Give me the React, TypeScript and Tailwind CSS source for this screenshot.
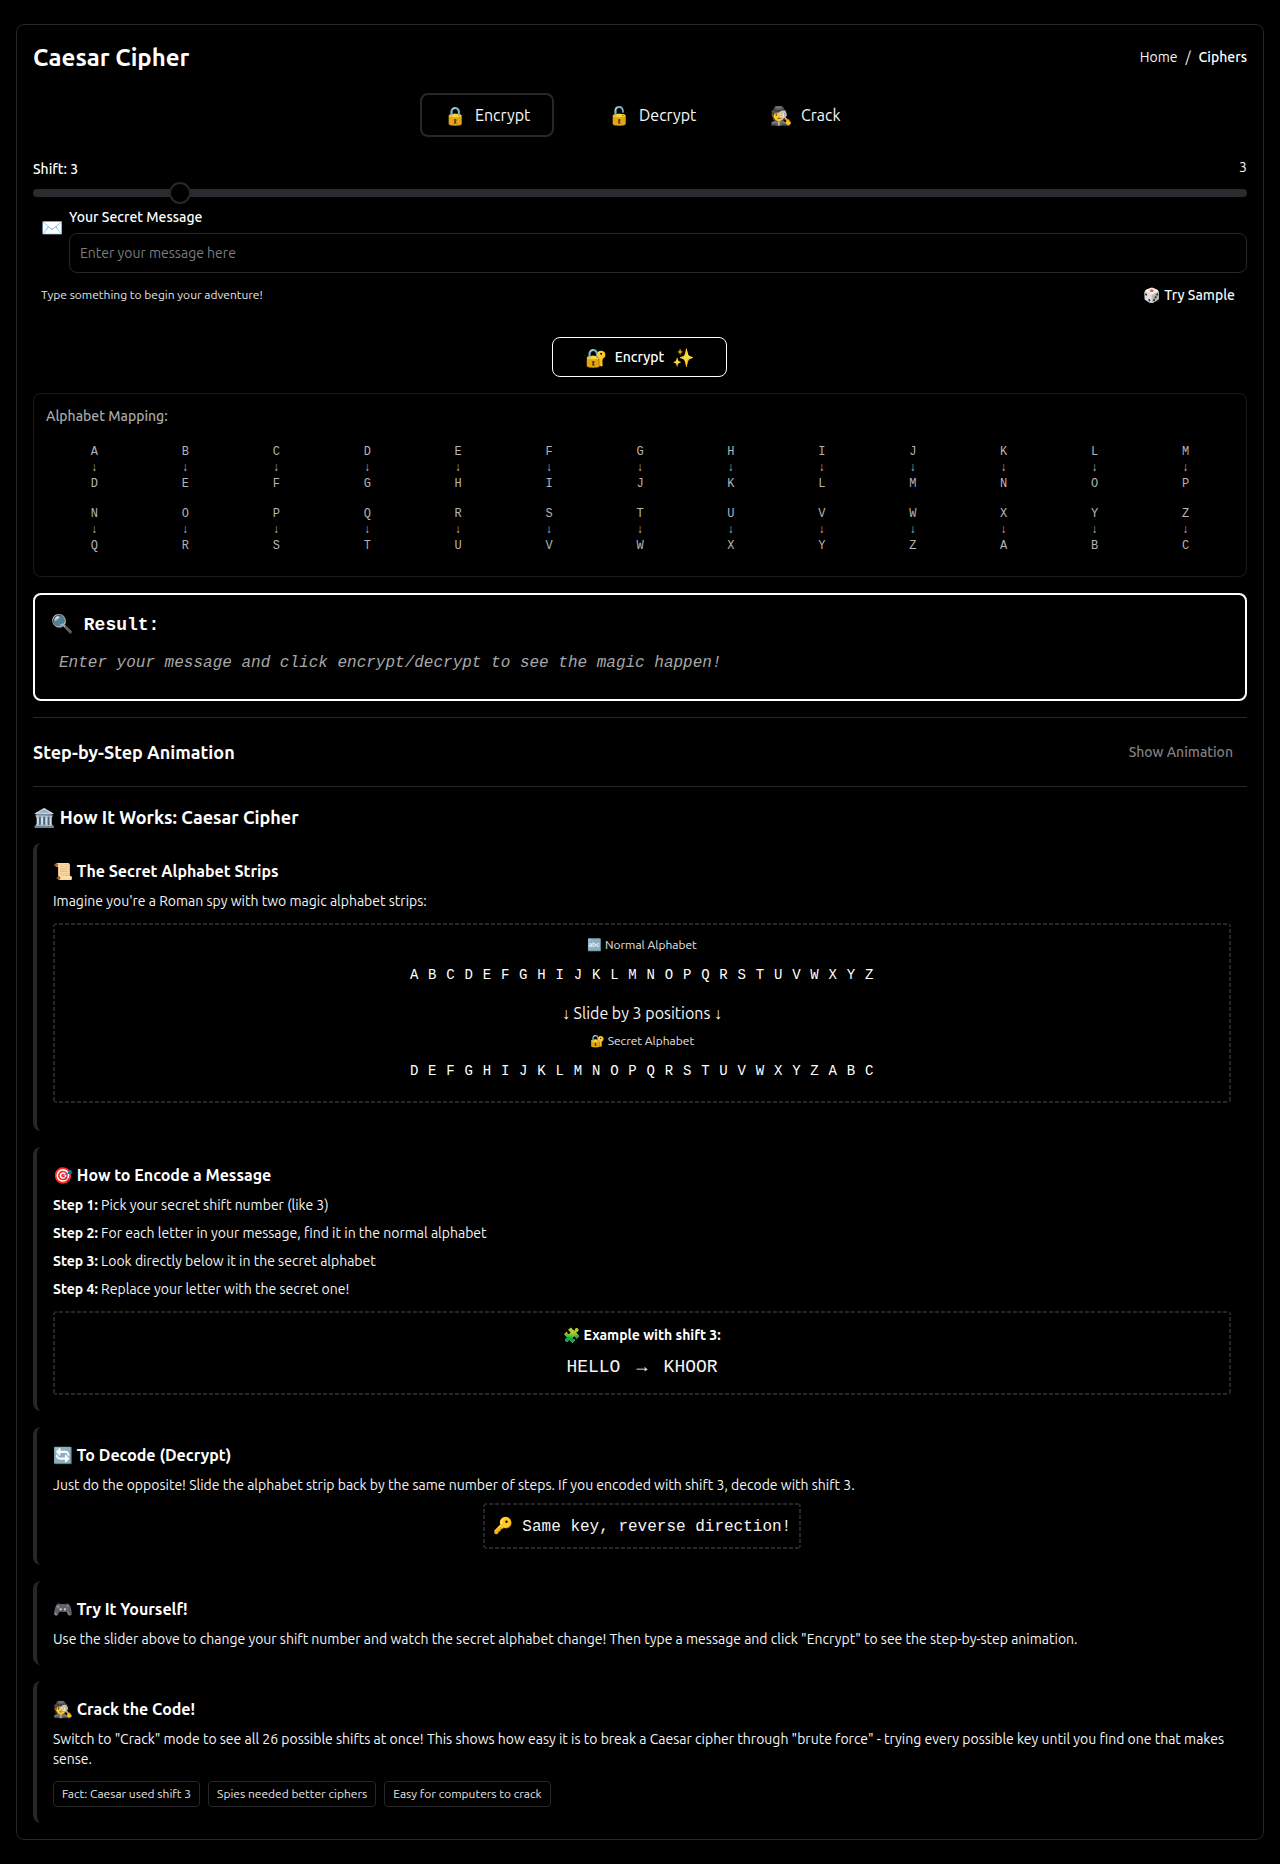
import type { ReactNode } from "react";

const ALPHABET = "ABCDEFGHIJKLMNOPQRSTUVWXYZ".split("");
const SHIFT = 3;
const shifted = (i: number) => ALPHABET[(i + SHIFT) % 26];

const MONO = "font-['Liberation_Mono',monospace]";

// Short 4px dashes with 2px gaps along all four edges, finer than a native dashed border.
const DASHED =
  "rounded bg-[linear-gradient(90deg,#27272a_4px,transparent_4px),linear-gradient(90deg,#27272a_4px,transparent_4px),linear-gradient(#27272a_4px,transparent_4px),linear-gradient(#27272a_4px,transparent_4px)] bg-[position:0_0,0_100%,0_0,100%_0] [background-repeat:repeat-x,repeat-x,repeat-y,repeat-y] bg-[length:6px_2px,6px_2px,2px_6px,2px_6px]";

function Section({ icon, title, className = "", children }: { icon: string; title: string; className?: string; children: ReactNode }) {
  return (
    <section className={`rounded-lg border-l-4 border-[#27272a] px-4 pt-4 ${className}`}>
      <h4 className="mb-2 h-6 text-base leading-6 font-semibold text-white">
        {icon} {title}
      </h4>
      {children}
    </section>
  );
}

function Mode({ icon, label, active = false, className = "" }: { icon: string; label: string; active?: boolean; className?: string }) {
  return (
    <button className={`flex h-11 items-center gap-[9px] rounded-lg border-2 pl-[22px] text-base text-neutral-50 ${active ? "border-[#27272a]" : "border-transparent"} ${className}`}>
      <span className="text-lg">{icon}</span>
      <span>{label}</span>
    </button>
  );
}

function MappingRow({ from }: { from: number }) {
  return (
    <div className={`grid grid-cols-13 px-[3px] text-center text-xs leading-4 text-[#b4b4b4] ${MONO}`}>
      {ALPHABET.slice(from, from + 13).map((letter, i) => (
        <div key={letter}>
          <div>{letter}</div>
          <div>↓</div>
          <div>{shifted(from + i)}</div>
        </div>
      ))}
    </div>
  );
}

export default function App() {
  return (
    <div className="h-[1864px] bg-black px-4 pt-6 font-['Ubuntu','Noto_Sans',sans-serif] text-neutral-100">
      <main className="h-[1816px] rounded-lg border border-[#27272a] p-4">
        <header className="flex h-[34px] items-center justify-between">
          <h1 className="text-2xl font-semibold text-white">Caesar Cipher</h1>
          <nav className="mb-[2px] flex gap-2 text-sm">
            <span>Home</span>
            <span>/</span>
            <span className="font-medium text-white">Ciphers</span>
          </nav>
        </header>

        <div className="mt-[18px] flex pl-[387px]">
          <Mode icon="🔒" label="Encrypt" active className="w-[134px]" />
          <Mode icon="🔓" label="Decrypt" className="ml-[30px] w-[134px]" />
          <Mode icon="🕵️" label="Crack" className="ml-[28px] w-[120px]" />
        </div>

        <div className="mt-5 flex h-5 justify-between text-sm">
          <span className="pt-[2px] font-medium text-white">Shift: 3</span>
          <span>3</span>
        </div>
        <div className="relative mt-3 h-2 rounded-full bg-[#2c2b30]">
          <span className="absolute -top-[7px] left-[135.5px] h-[22px] w-[22px] rounded-full border-2 border-[#27272a] bg-black" />
        </div>

        <div className="mt-[10px] flex">
          <span className="w-9 pt-2 pl-2 text-lg leading-6">✉️</span>
          <div className="flex-1">
            <div className="mb-[6px] text-sm font-medium text-white">Your Secret Message</div>
            <div className="flex h-10 items-center rounded-lg border border-[#27272a] px-[10px] text-sm text-[#7c7c7c]">Enter your message here</div>
          </div>
        </div>
        <div className="mt-3 flex h-5 items-center justify-between pr-3 pl-2">
          <span className="text-xs text-neutral-200">Type something to begin your adventure!</span>
          <span className="flex gap-1 text-sm font-medium text-neutral-100"><span>🎲</span><span>Try Sample</span></span>
        </div>

        <div className="mt-8 flex justify-center pr-px">
          <button className="flex h-10 w-[175px] items-center justify-center gap-2 rounded-lg border border-white text-sm font-medium text-white">
            <span className="text-lg">🔐</span>
            <span>Encrypt</span>
            <span className="text-lg">✨</span>
          </button>
        </div>

        <div className="mt-4 h-[184px] rounded-lg border border-[#1b1b1e] p-3">
          <div className="mb-[18px] text-sm font-medium text-[#a8a8a8]">Alphabet Mapping:</div>
          <MappingRow from={0} />
          <div className="h-[14px]" />
          <MappingRow from={13} />
        </div>

        <div className={`mt-4 h-[108px] rounded-lg border-2 border-white px-4 pt-4 ${MONO}`}>
          <div className="text-lg leading-7 font-bold text-white">🔍 Result:</div>
          <div className="mt-3 pl-2 text-base text-[#a8a8a8] italic">Enter your message and click encrypt/decrypt to see the magic happen!</div>
        </div>

        <div className="mt-4 flex h-[70px] items-center justify-between border-y border-[#27272a]">
          <h3 className="text-lg font-semibold text-white">Step-by-Step Animation</h3>
          <span className="pr-[14px] text-sm font-medium text-[#808080]">Show Animation</span>
        </div>

        <h3 className="mt-4 h-7 text-lg leading-7 font-semibold text-white">🏛️ <span className="ml-[0.5px]">How It Works: Caesar Cipher</span></h3>

        <div className="mt-3 flex flex-col gap-4">
          <Section icon="📜" title="The Secret Alphabet Strips" className="h-[288px]">
            <p className="text-sm">Imagine you're a Roman spy with two magic alphabet strips:</p>
            <div className={`mt-3 flex h-[180px] flex-col items-center pt-[14px] ${DASHED}`}>
              <div className="text-xs text-neutral-200">🔤 Normal Alphabet</div>
              <div className={`mt-3 text-sm tracking-[0.7px] text-white ${MONO}`}>{ALPHABET.join(" ")}</div>
              <div className="mt-4 text-base">↓ Slide by 3 positions ↓</div>
              <div className="mt-2 text-xs text-neutral-200">🔐 Secret Alphabet</div>
              <div className={`mt-3 text-sm tracking-[0.7px] text-white ${MONO}`}>{ALPHABET.map((_, i) => shifted(i)).join(" ")}</div>
            </div>
          </Section>

          <Section icon="🎯" title="How to Encode a Message" className="h-[264px]">
            <div className="flex flex-col gap-2 text-sm">
              <p><b className="font-bold text-white">Step 1:</b> Pick your secret shift number (like 3)</p>
              <p><b className="font-bold text-white">Step 2:</b> For each letter in your message, find it in the normal alphabet</p>
              <p><b className="font-bold text-white">Step 3:</b> Look directly below it in the secret alphabet</p>
              <p><b className="font-bold text-white">Step 4:</b> Replace your letter with the secret one!</p>
            </div>
            <div className={`mt-3 flex h-[84px] flex-col items-center pt-[14px] ${DASHED}`}>
              <div className="text-sm font-bold text-white">🧩 Example with shift 3:</div>
              <div className={`mt-2 text-lg leading-7 text-neutral-100 ${MONO}`}>HELLO <span className="mx-[5.4px]">→</span> KHOOR</div>
            </div>
          </Section>

          <Section icon="🔄" title="To Decode (Decrypt)" className="h-[138px]">
            <p className="text-sm">Just do the opposite! Slide the alphabet strip back by the same number of steps. If you encoded with shift 3, decode with shift 3.</p>
            <div className={`mx-auto mt-2 flex h-[46px] w-[318px] items-center justify-center pt-[2px] text-base whitespace-pre text-neutral-100 ${DASHED} ${MONO}`}>🔑 Same key, reverse direction!</div>
          </Section>

          <Section icon="🎮" title="Try It Yourself!" className="h-[84px]">
            <p className="text-sm">Use the slider above to change your shift number and watch the secret alphabet change! Then type a message and click "Encrypt" to see the step-by-step animation.</p>
          </Section>

          <Section icon="🕵️" title="Crack the Code!" className="h-[142px]">
            <p className="text-sm">Switch to "Crack" mode to see all 26 possible shifts at once! This shows how easy it is to break a Caesar cipher through "brute force" - trying every possible key until you find one that makes sense.</p>
            <div className="mt-3 flex gap-2 text-xs text-neutral-200">
              <span className="flex h-[26px] items-center rounded border border-[#27272a] px-2">Fact: Caesar used shift 3</span>
              <span className="flex h-[26px] items-center rounded border border-[#27272a] px-2">Spies needed better ciphers</span>
              <span className="flex h-[26px] items-center rounded border border-[#27272a] px-2">Easy for computers to crack</span>
            </div>
          </Section>
        </div>
      </main>
    </div>
  );
}
